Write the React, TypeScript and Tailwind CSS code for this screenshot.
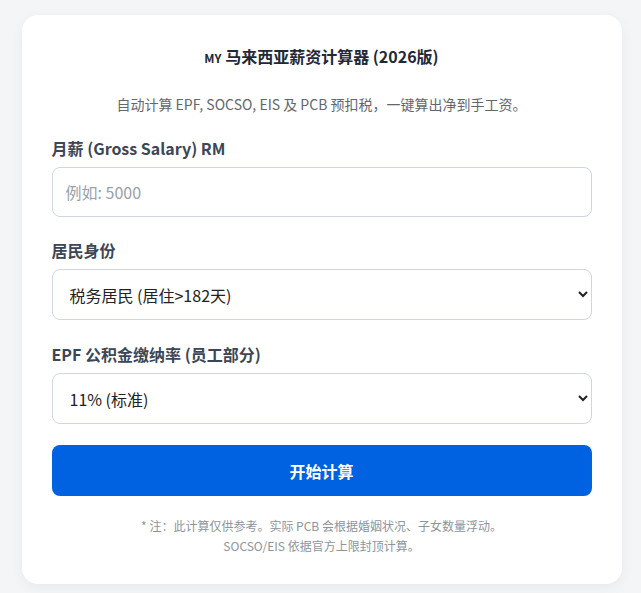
import React from "react";

export default function App() {
  const font = { fontFamily: '"Noto Sans CJK SC", "Noto Sans", sans-serif' };
  return (
    <div className="min-h-[593px] bg-[#f4f5f7] pt-[15px] pb-[11px] pl-[2px]" style={font}>
      <div className="mx-auto w-[600px] rounded-[16px] bg-white px-[30px] pt-[28px] pb-[28px] shadow-[0_4px_14px_rgba(0,0,0,0.05)]">
        <h1 className="text-center text-[16px] font-bold leading-[26px] text-[#1f2937]">
          <span className="text-[12px] font-bold">MY</span> 马来西亚薪资计算器 (2026版)
        </h1>
        <p className="mt-[22px] text-center text-[14px] leading-[22px] text-[#62676e]">
          自动计算 EPF, SOCSO, EIS 及 PCB 预扣税，一键算出净到手工资。
        </p>

        <div className="mt-[21px]">
          <label className="block text-[16px] font-bold leading-[24px] text-[#3b4757]">月薪 (Gross Salary) RM</label>
          <input
            type="number"
            placeholder="例如: 5000"
            className="mt-[7px] block h-[50px] w-full rounded-[8px] border border-[#cfd6e0] px-[13px] text-[16px] text-[#222] placeholder:text-[#9aa1a9] outline-none"
          />
        </div>

        <div className="mt-[21px]">
          <label className="block text-[16px] font-bold leading-[24px] text-[#3b4757]">居民身份</label>
          <select className="mt-[7px] block h-[51px] w-full rounded-[8px] border border-[#cfd6e0] bg-white px-[13px] text-[16px] text-[#222] outline-none">
            <option>税务居民 (居住&gt;182天)</option>
          </select>
        </div>

        <div className="mt-[22px]">
          <label className="block text-[16px] font-bold leading-[24px] text-[#3b4757]">EPF 公积金缴纳率 (员工部分)</label>
          <select className="mt-[7px] block h-[51px] w-full rounded-[8px] border border-[#cfd6e0] bg-white px-[13px] text-[16px] text-[#222] outline-none">
            <option>11% (标准)</option>
          </select>
        </div>

        <button className="mt-[21px] block h-[51px] w-full rounded-[8px] bg-[#0062e0] text-[16px] font-bold text-white">
          开始计算
        </button>

        <p className="mt-[20px] text-center text-[12px] leading-[20px] text-[#8d949c]">
          * 注：此计算仅供参考。实际 PCB 会根据婚姻状况、子女数量浮动。
          <br />
          SOCSO/EIS 依据官方上限封顶计算。
        </p>
      </div>
    </div>
  );
}
